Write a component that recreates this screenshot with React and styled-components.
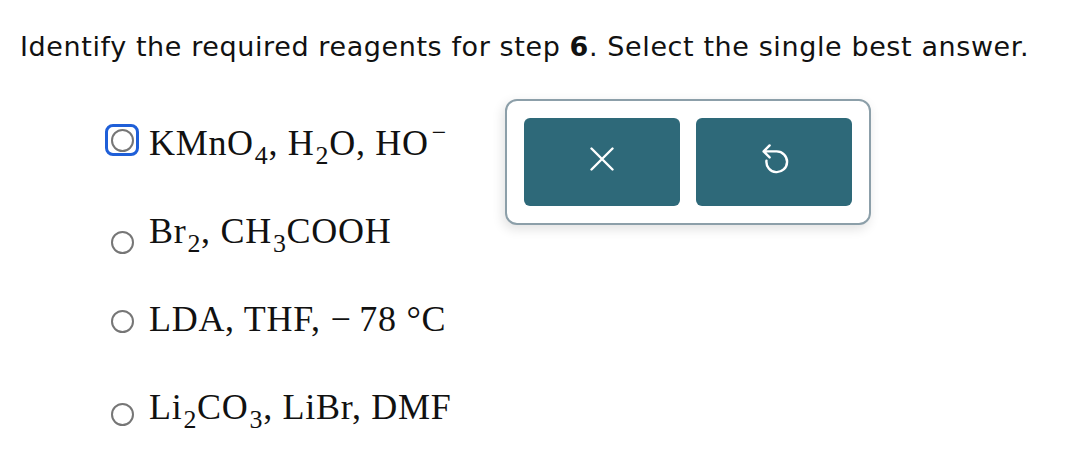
import React, { useState } from "react";
import styled, { createGlobalStyle } from "styled-components";

const GlobalStyle = createGlobalStyle`
  html, body {
    margin: 0;
    padding: 0;
    background: #ffffff;
  }
`;

const App = () => {
  const [focused] = useState("a");

  // built inside render so the styled parts below are defined by then
  const options = [
    {
      id: "a",
      shift: -3,
      label: (
        <>
          KMnO<Sub>4</Sub>, H<Sub>2</Sub>O, HO<Sup>−</Sup>
        </>
      ),
    },
    {
      id: "b",
      shift: 11,
      label: (
        <>
          Br<Sub>2</Sub>, CH<Sub>3</Sub>COOH
        </>
      ),
    },
    {
      id: "c",
      shift: 2,
      label: <>LDA, THF, −&#8201;78 °C</>,
    },
    {
      id: "d",
      shift: 7,
      label: (
        <>
          Li<Sub>2</Sub>CO<Sub>3</Sub>, LiBr, DMF
        </>
      ),
    },
  ];

  return (
    <Page>
      <GlobalStyle />
      <Prompt>
        Identify the required reagents for step <b>6</b>. Select the single
        best answer.
      </Prompt>
      <Content>
        <Choices>
          {options.map((opt) => (
            <Row key={opt.id}>
              <RadioSlot $shift={opt.shift}>
                {focused === opt.id ? (
                  <FocusRing>
                    <Radio />
                  </FocusRing>
                ) : (
                  <Radio />
                )}
              </RadioSlot>
              <Label>{opt.label}</Label>
            </Row>
          ))}
        </Choices>
        <ToolPanel>
          <ToolButton aria-label="Clear">
            <svg width="24" height="24" viewBox="0 0 24 24" fill="none">
              <path
                d="M1.5 1.5 L22.5 22.5 M22.5 1.5 L1.5 22.5"
                stroke="#fff"
                strokeWidth="2.4"
                strokeLinecap="round"
              />
            </svg>
          </ToolButton>
          <ToolButton aria-label="Undo">
            <svg width="33" height="37" viewBox="0 0 30 34" fill="none">
              <path
                d="M5 10.5 L10.5 5 M5 10.5 L10.5 16 M5 10.5 H17 A9.5 9.5 0 1 1 7.6 19"
                stroke="#fff"
                strokeWidth="2.2"
                strokeLinecap="round"
                strokeLinejoin="round"
              />
            </svg>
          </ToolButton>
        </ToolPanel>
      </Content>
    </Page>
  );
};

const Page = styled.div`
  width: 1092px;
  height: 462px;
  overflow: hidden;
  color: #111;
`;

const Prompt = styled.p`
  margin: 0;
  padding: 30px 20px 0;
  height: 69px;
  box-sizing: border-box;
  font-family: "DejaVu Sans", Verdana, sans-serif;
  font-size: 27px;
  letter-spacing: 0.6px;
  line-height: 34px;
  white-space: nowrap;
  b {
    font-weight: 700;
  }
`;

const Content = styled.div`
  display: flex;
  align-items: flex-start;
  margin-top: 30px;
  padding-left: 105px;
`;

const Choices = styled.div`
  width: 400px;
  display: flex;
  flex-direction: column;
`;

const Row = styled.div`
  display: flex;
  align-items: center;
  height: 88px;
  gap: 10px;
`;

const RadioSlot = styled.span`
  width: 34px;
  display: flex;
  justify-content: center;
  align-items: center;
  transform: translateY(${(p) => p.$shift}px);
`;

const Radio = styled.span`
  display: block;
  width: 23px;
  height: 23px;
  box-sizing: border-box;
  border: 2px solid #767676;
  border-radius: 50%;
  background: #fff;
`;

const FocusRing = styled.span`
  display: flex;
  justify-content: center;
  align-items: center;
  width: 35px;
  height: 32px;
  box-sizing: border-box;
  border: 3.5px solid #1f5fd8;
  border-radius: 8px;
`;

const Label = styled.span`
  font-family: "Liberation Serif", "Times New Roman", serif;
  font-size: 36px;
  letter-spacing: 0.7px;
  line-height: 1;
  color: #111;
  white-space: nowrap;
`;

const Sub = styled.span`
  font-size: 0.72em;
  position: relative;
  top: 0.36em;
  margin-left: 1px;
`;

const Sup = styled.span`
  font-size: 0.72em;
  position: relative;
  top: -0.55em;
  margin-left: 3px;
`;

const ToolPanel = styled.div`
  display: flex;
  gap: 16px;
  padding: 17px;
  border: 2px solid #8c9fa9;
  border-radius: 12px;
  background: #fff;
  box-shadow: -2px 4px 12px rgba(0, 0, 0, 0.12);
`;

const ToolButton = styled.button`
  width: 156px;
  height: 88px;
  display: flex;
  align-items: center;
  justify-content: center;
  padding: 0 0 7px;
  border: none;
  border-radius: 6px;
  background: #2e6979;
  cursor: pointer;
`;

export default App;
